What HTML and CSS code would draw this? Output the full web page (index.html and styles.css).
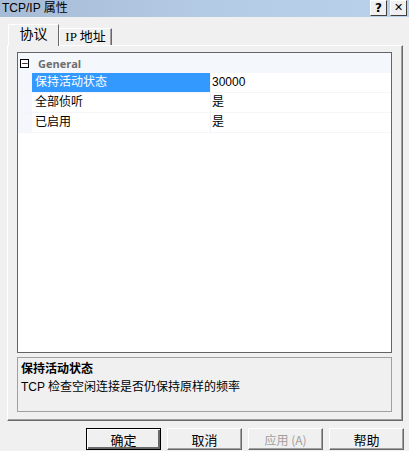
FILE: index.html
```html
<!DOCTYPE html>
<html lang="zh-CN">
<head>
  <meta charset="UTF-8" />
  <title>TCP/IP 属性</title>
  <link rel="stylesheet" href="styles.css">
</head>
<body>
  <div class="window">
    <div class="titlebar">
      <span class="caption">TCP/IP 属性</span>
      <div class="caption-btns">
        <span class="cap-btn">?</span>
        <span class="cap-btn close">✕</span>
      </div>
    </div>

    <div class="tabs">
      <div class="tab active">协议</div>
      <div class="tab mono">IP 地址</div>
    </div>

    <div class="panel">
      <div class="grid">
        <div class="category">
          <span class="toggle">−</span>
          <span class="cat-name">General</span>
        </div>
        <div class="row selected">
          <div class="gutter"></div>
          <div class="name">保持活动状态</div>
          <div class="value">30000</div>
        </div>
        <div class="row">
          <div class="gutter"></div>
          <div class="name">全部侦听</div>
          <div class="value">是</div>
        </div>
        <div class="row">
          <div class="gutter"></div>
          <div class="name">已启用</div>
          <div class="value">是</div>
        </div>
      </div>

      <div class="desc">
        <div class="desc-title">保持活动状态</div>
        <div class="desc-text">TCP 检查空闲连接是否仍保持原样的频率</div>
      </div>
    </div>

    <div class="buttons">
      <button class="btn default">确定</button>
      <button class="btn">取消</button>
      <button class="btn disabled">应用 (A)</button>
      <button class="btn">帮助</button>
    </div>
  </div>
</body>
</html>
```

FILE: styles.css
```css
/* Classic Windows property dialog */
body {
  margin: 0;
  background: #f0f0f0;
  font-family: "Liberation Sans", "Noto Sans CJK SC", sans-serif;
  font-size: 12px;
  color: #000;
}

.window {
  width: 409px;
  height: 451px;
  overflow: hidden;
}

.titlebar {
  height: 17px;
  display: flex;
  justify-content: space-between;
  align-items: flex-start;
  background: linear-gradient(to right, #a6bbd6, #b4cbe5 50%, #b9d1ea);
}

.caption {
  padding: 1px 0 0 2px;
  font-size: 12px;
  line-height: 14px;
}

.caption-btns {
  display: flex;
  gap: 3px;
  padding-right: 2px;
}

.cap-btn {
  width: 15px;
  height: 14px;
  background: #f0f0f0;
  border: 1px solid;
  border-color: #fff #404040 #404040 #fff;
  font-family: "DejaVu Sans", sans-serif;
  font-weight: bold;
  font-size: 12px;
  line-height: 14px;
  text-align: center;
}

.cap-btn.close {
  font-size: 11px;
}

.tabs {
  display: flex;
  align-items: flex-end;
  margin-top: 8px;
  padding-left: 8px;
  height: 20px;
  position: relative;
  z-index: 1;
}

.tab {
  height: 16px;
  width: 51px;
  border: 1px solid;
  border-bottom: none;
  border-color: #fff #696969 #696969 #fff;
  box-shadow: inset -1px 0 0 #a0a0a0;
  text-align: center;
  line-height: 16px;
  font-size: 12px;
}

.tab.active {
  height: 21px;
  width: 49px;
  line-height: 19px;
  background: #f0f0f0;
  margin-bottom: -1px;
  font-size: 14px;
  box-shadow: none;
}

.tab.mono {
  font-family: "Liberation Serif", "Noto Sans CJK SC", serif;
  font-size: 13px;
}

.panel {
  margin: 0 6px 0 7px;
  border: 1px solid;
  border-color: #fff #696969 #696969 #fff;
  box-shadow: inset -1px -1px 0 #a0a0a0;
  padding: 6px 0 0 9px;
  box-sizing: border-box;
  height: 376px;
}

.grid {
  width: 375px;
  height: 301px;
  border: 1px solid #646464;
  box-sizing: border-box;
  background: #fff;
}

.category {
  height: 20px;
  display: flex;
  align-items: center;
  background: #f4f7fc;
}

.toggle {
  width: 7px;
  height: 7px;
  margin: 0 0 0 2px;
  border: 1px solid #000;
  background: #fff;
  font-size: 9px;
  line-height: 7px;
  text-align: center;
  font-family: "DejaVu Sans", sans-serif;
}

.cat-name {
  margin-left: 9px;
  font-weight: bold;
  color: #6d6d6d;
  font-family: "Open Sans", "Liberation Sans", sans-serif;
  font-size: 11px;
}

.row {
  display: flex;
  height: 20px;
  border-bottom: 1px solid #f3f5f9;
  box-sizing: border-box;
  line-height: 19px;
}

.gutter {
  width: 14px;
  background: #f4f7fc;
}

.name {
  width: 175px;
  padding-left: 3px;
  border-right: 1px solid #f0f2f6;
}

.row.selected .name {
  background: #3399ff;
  color: #fff;
}

.value {
  flex: 1;
  padding-left: 1px;
}

.desc {
  margin-top: 4px;
  width: 375px;
  height: 55px;
  border: 1px solid #a0a0a0;
  box-sizing: border-box;
  padding: 3px 0 0 3px;
}

.desc-title {
  font-weight: bold;
  line-height: 16px;
}

.desc-text {
  margin-top: 2px;
  line-height: 16px;
}

.buttons {
  display: flex;
  justify-content: flex-end;
  gap: 6px;
  padding-right: 5px;
  margin-top: 7px;
}

.btn {
  width: 75px;
  height: 22px;
  padding: 0;
  background: #f0f0f0;
  border: 1px solid;
  border-color: #fff #696969 #696969 #fff;
  box-shadow: inset -1px -1px 0 #a0a0a0;
  font-family: "Noto Sans CJK SC", sans-serif;
  font-size: 13px;
  color: #000;
}

.btn.default {
  outline: 1px solid #000;
  outline-offset: -1px;
  border-color: #fff #404040 #404040 #fff;
  box-shadow: inset 1px 1px 0 #fff, inset -2px -2px 0 #696969;
}

.btn.disabled {
  color: #a0a0a0;
  font-size: 12px;
}
```
